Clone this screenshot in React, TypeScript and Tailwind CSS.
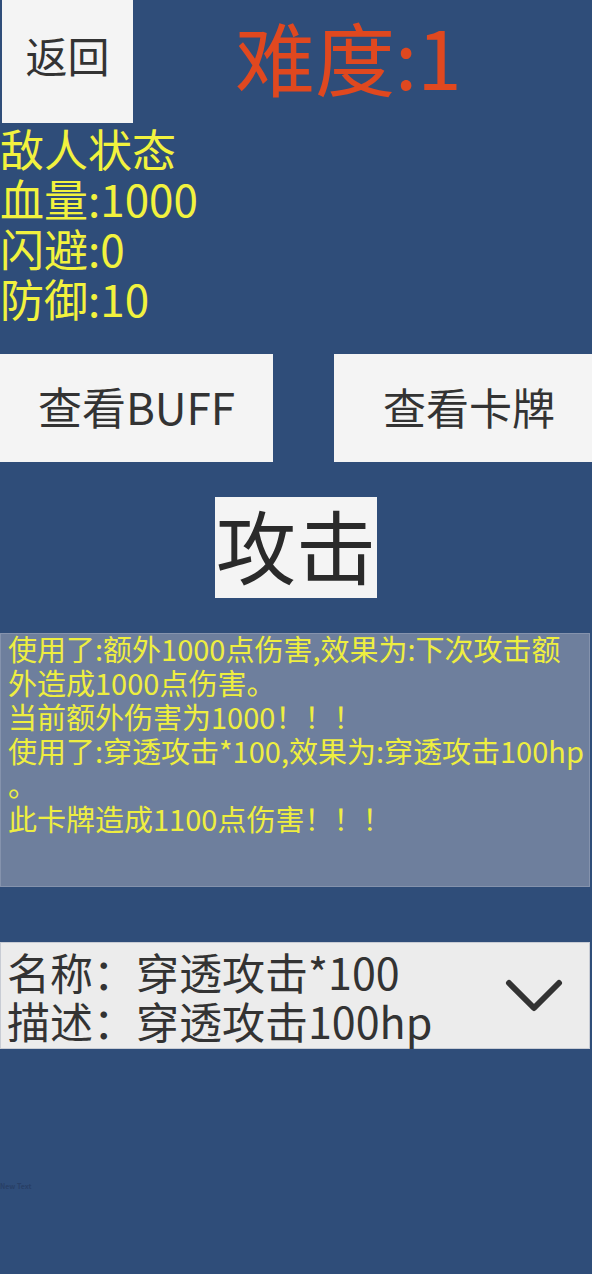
import React from "react";

const FONT = { fontFamily: '"Noto Sans CJK SC", "Noto Sans", sans-serif' };

export default function App() {
  const logLines = [
    "使用了:额外1000点伤害,效果为:下次攻击额",
    "外造成1000点伤害。",
    "当前额外伤害为1000！！！",
    "使用了:穿透攻击*100,效果为:穿透攻击100hp",
    "。",
    "此卡牌造成1100点伤害！！！",
  ];
  return (
    <div className="relative w-[592px] h-[1274px] bg-[#2f4d79] overflow-hidden" style={FONT}>
      {/* header */}
      <div className="flex items-start">
        <button className="ml-[2px] w-[131px] h-[123px] bg-[#f4f4f4] text-[#333333] text-[42px] leading-none flex items-center justify-center pb-[14px]">
          返回
        </button>
        <div className="ml-[102px] mt-[10px] text-[80px] leading-[90px] text-[#e0481f] whitespace-nowrap">
          难度:1
        </div>
      </div>

      {/* stats */}
      <div className="text-[44px] leading-[50px] text-[#f2f23e] whitespace-nowrap">
        <div>敌人状态</div>
        <div>血量:1000</div>
        <div>闪避:0</div>
        <div>防御:10</div>
      </div>

      {/* buttons */}
      <div className="mt-[31px] flex justify-between">
        <button className="w-[273px] h-[108px] bg-[#f4f4f4] text-[#333333] text-[44px] leading-none flex items-center justify-center pb-[4px]">
          查看BUFF
        </button>
        <button className="w-[258px] h-[108px] bg-[#f4f4f4] text-[#333333] text-[43px] leading-none flex items-center justify-center pl-[12px] pb-[4px]">
          查看卡牌
        </button>
      </div>

      <div className="mt-[35px] flex">
        <button className="ml-[215px] w-[162px] h-[101px] bg-[#f4f4f4] text-[#2a2a2a] text-[80px] leading-none flex items-center justify-center pb-[10px]">
          攻击
        </button>
      </div>

      {/* log */}
      <div className="mt-[35px] w-[590px] h-[254px] bg-[#6e7f9d] border border-[#8593ad] pl-[7px] pt-0 text-[29px] leading-[34px] text-[#eeee40] whitespace-nowrap overflow-hidden">
        <div className="-mt-[3px]">
          {logLines.map((l, i) => (
            <div key={i}>{l}</div>
          ))}
        </div>
      </div>

      {/* dropdown */}
      <div className="mt-[55px] w-[590px] h-[107px] bg-[#ececec] border border-[#c8ccd4] flex items-center justify-between">
        <div className="pl-[6px] text-[43px] leading-[49px] text-[#333333] whitespace-nowrap">
          <div>名称：穿透攻击*100</div>
          <div>描述：穿透攻击100hp</div>
        </div>
        <svg className="mr-[26px]" width="58" height="34" viewBox="0 0 58 34" fill="none">
          <path d="M4 4 L29 29 L54 4" stroke="#333333" strokeWidth="6" strokeLinecap="round" strokeLinejoin="round" />
        </svg>
      </div>

      <div className="absolute left-0 top-[1183px] text-[7px] leading-none text-[#283f66] font-bold">New Text</div>
    </div>
  );
}
